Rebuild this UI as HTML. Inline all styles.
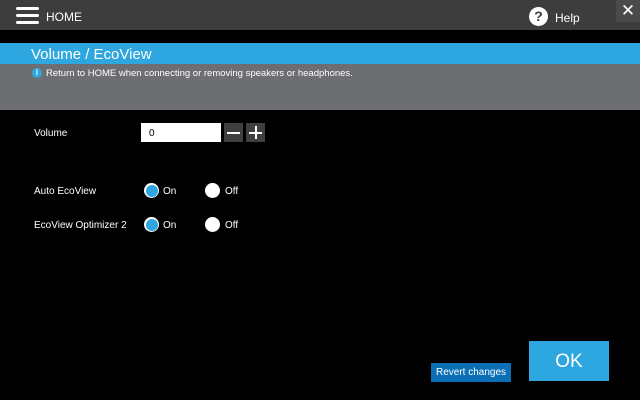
<!DOCTYPE html>
<html><head><style>
*{margin:0;padding:0;box-sizing:border-box}
body{width:640px;height:400px;background:#000;position:relative;overflow:hidden;font-family:"Liberation Sans",sans-serif;color:#fff}
.a{position:absolute}
.r{position:absolute;width:15px;height:15px;border-radius:50%;background:#fff}
.r.on::after{content:"";position:absolute;left:1.5px;top:1.5px;width:12px;height:12px;border-radius:50%;background:#2ea6df}
.t{position:absolute;font-size:10px}
</style></head><body>
<div class="a" style="left:0;top:0;width:640px;height:30px;background:#3d3d3d"></div>
<div class="a" style="left:16px;top:7px;width:23px;height:3px;background:#fff;border-radius:2px"></div>
<div class="a" style="left:16px;top:14px;width:23px;height:3px;background:#fff;border-radius:2px"></div>
<div class="a" style="left:16px;top:21px;width:23px;height:3px;background:#fff;border-radius:2px"></div>
<div class="t" style="left:46px;top:10px;font-size:12px">HOME</div>
<div class="a" style="left:529px;top:7px;width:19px;height:19px;border-radius:50%;background:#fff;color:#3d3d3d;font-weight:bold;font-size:14px;text-align:center;line-height:19px">?</div>
<div class="t" style="left:555px;top:11px;font-size:12px">Help</div>
<div class="a" style="left:616px;top:0;width:24px;height:22px;background:#4a4a4a;text-align:center;font-size:17px;line-height:22px">✕</div>
<div class="a" style="left:0;top:43px;width:640px;height:21px;background:#2ea6df"></div>
<div class="t" style="left:31px;top:46px;font-size:15px">Volume / EcoView</div>
<div class="a" style="left:0;top:64px;width:640px;height:46px;background:#6d6e71"></div>
<div class="a" style="left:32px;top:68px;width:10px;height:10px;border-radius:50%;background:#2ea6df;font-size:8px;text-align:center;line-height:10px;font-weight:bold">i</div>
<div class="t" style="left:46px;top:68px;font-size:9.5px">Return to HOME when connecting or removing speakers or headphones.</div>
<div class="t" style="left:34px;top:128px">Volume</div>
<div class="a" style="left:141px;top:123px;width:80px;height:19px;background:#fff;color:#000;font-size:10px;padding:5px 8px">0</div>
<div class="a" style="left:224px;top:123px;width:19px;height:19px;background:#3f3f3f"><div class="a" style="left:3px;top:9px;width:13px;height:1.5px;background:#fff"></div></div>
<div class="a" style="left:246px;top:123px;width:19px;height:19px;background:#3f3f3f"><div class="a" style="left:3px;top:9px;width:13px;height:1.5px;background:#fff"></div><div class="a" style="left:9px;top:3px;width:1.5px;height:13px;background:#fff"></div></div>
<div class="t" style="left:34px;top:186px">Auto EcoView</div>
<div class="r on" style="left:144px;top:183px"></div><div class="t" style="left:163px;top:186px">On</div>
<div class="r" style="left:205px;top:183px"></div><div class="t" style="left:225px;top:186px">Off</div>
<div class="t" style="left:34px;top:220px">EcoView Optimizer 2</div>
<div class="r on" style="left:144px;top:217px"></div><div class="t" style="left:163px;top:220px">On</div>
<div class="r" style="left:205px;top:217px"></div><div class="t" style="left:225px;top:220px">Off</div>
<div class="a" style="left:431px;top:363px;width:80px;height:19px;background:#0a6fb5;font-size:10px;text-align:center;line-height:20px">Revert changes</div>
<div class="a" style="left:529px;top:341px;width:80px;height:40px;background:#2ea6df;font-size:19px;text-align:center;line-height:42px">OK</div>
</body></html>
